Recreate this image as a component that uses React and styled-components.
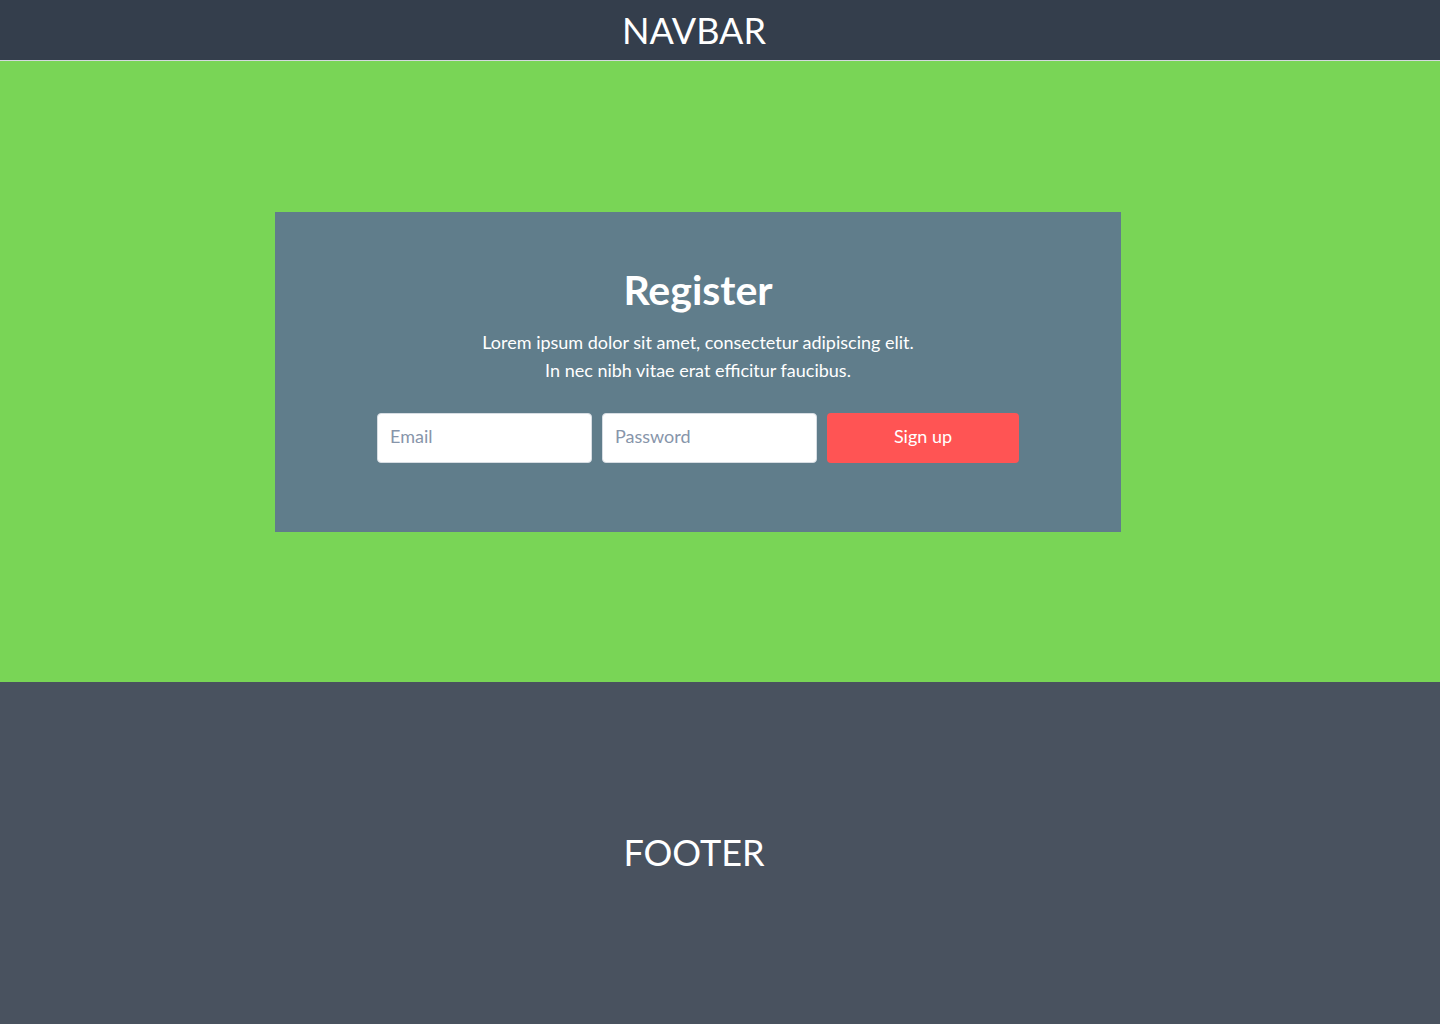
import React from "react";
import styled, { createGlobalStyle } from "styled-components";

const Global = createGlobalStyle`
  * { box-sizing: border-box; }
  html, body { margin: 0; padding: 0; }
  body { font-family: Lato, "Open Sans", sans-serif; background: #49525f; }
`;

const Page = styled.div`
  display: flex;
  flex-direction: column;
  min-height: 1024px;
`;

const Navbar = styled.header`
  height: 61px;
  background: #343e4c;
  border-bottom: 1px solid #d5d9de;
  display: flex;
`;

const BarInner = styled.div`
  width: 1388px;
  display: flex;
  align-items: center;
  justify-content: center;
`;

const BarTitle = styled.span`
  color: #ffffff;
  font-size: 36px;
  font-weight: 400;
  line-height: 1;
`;

const Hero = styled.main`
  height: 621px;
  background: #79d556;
  display: flex;
`;

const HeroInner = styled.div`
  width: 1396px;
  display: flex;
  align-items: center;
  justify-content: center;
`;

const Card = styled.section`
  width: 846px;
  height: 320px;
  background: #607d8b;
  padding-top: 54px;
  display: flex;
  flex-direction: column;
  align-items: center;
  color: #ffffff;
`;

const Title = styled.h1`
  margin: 0;
  font-size: 41px;
  font-weight: 700;
  line-height: 48px;
`;

const Lead = styled.p`
  margin: 14px 0 0;
  font-size: 18px;
  line-height: 28px;
  text-align: center;
`;

const Form = styled.form`
  margin-top: 29px;
  display: flex;
  gap: 10px;
`;

const Input = styled.input`
  width: 215px;
  height: 50px;
  border: 1px solid #d7dde3;
  border-radius: 4px;
  background: #ffffff;
  padding: 0 12px 3px;
  font-family: Lato, "Open Sans", sans-serif;
  font-size: 18px;
  color: #333;
  outline: none;
  &::placeholder { color: #8795aa; }
`;

const Button = styled.button`
  width: 192px;
  height: 50px;
  border: none;
  border-radius: 4px;
  background: #ff5454;
  color: #ffffff;
  padding: 0 0 3px;
  font-family: Lato, "Open Sans", sans-serif;
  font-size: 18px;
  cursor: pointer;
`;

const Footer = styled.footer`
  flex: 1;
  height: 342px;
  background: #49525f;
  display: flex;
  padding-bottom: 2px;
`;

export default function App() {
  return (
    <>
      <Global />
      <Page>
        <Navbar>
          <BarInner>
            <BarTitle>NAVBAR</BarTitle>
          </BarInner>
        </Navbar>
        <Hero>
          <HeroInner>
            <Card>
              <Title>Register</Title>
              <Lead>
                Lorem ipsum dolor sit amet, consectetur adipiscing elit.
                <br />
                In nec nibh vitae erat efficitur faucibus.
              </Lead>
              <Form onSubmit={(e) => e.preventDefault()}>
                <Input type="email" placeholder="Email" />
                <Input type="password" placeholder="Password" />
                <Button type="submit">Sign up</Button>
              </Form>
            </Card>
          </HeroInner>
        </Hero>
        <Footer>
          <BarInner>
            <BarTitle>FOOTER</BarTitle>
          </BarInner>
        </Footer>
      </Page>
    </>
  );
}
